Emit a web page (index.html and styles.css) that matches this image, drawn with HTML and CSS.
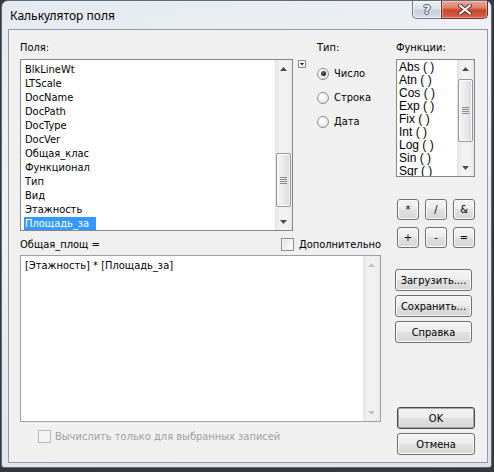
FILE: index.html
```html
<!DOCTYPE html>
<html>
<head>
<meta charset="utf-8">
<title>Калькулятор поля</title>
<link rel="stylesheet" href="styles.css">
</head>
<body>
<div class="window">
  <div class="titlebar">
    <span class="title">Калькулятор поля</span>
    <div class="caption-btns">
      <div class="cap-help"><span class="help-glyph">?</span></div>
      <div class="cap-close">
        <svg width="14" height="11" viewBox="0 0 14 11">
          <path d="M2 1.5 L12 9.5 M12 1.5 L2 9.5" stroke="#5a2a22" stroke-width="4" stroke-linecap="round"/>
          <path d="M2 1.5 L12 9.5 M12 1.5 L2 9.5" stroke="#ffffff" stroke-width="2.2" stroke-linecap="round"/>
        </svg>
      </div>
    </div>
  </div>
  <div class="client">
    <div class="left">
      <div class="top-row">
        <div class="fields-col">
          <div class="label">Поля:</div>
          <div class="listbox fields">
            <div class="items">
              <div class="item">BlkLineWt</div>
              <div class="item">LTScale</div>
              <div class="item">DocName</div>
              <div class="item">DocPath</div>
              <div class="item">DocType</div>
              <div class="item">DocVer</div>
              <div class="item">Общая_клас</div>
              <div class="item">Функционал</div>
              <div class="item">Тип</div>
              <div class="item">Вид</div>
              <div class="item">Этажность</div>
              <div class="item"><span class="sel">Площадь_за</span></div>
            </div>
            <div class="vscroll">
              <div class="arrow"><svg width="7" height="4" viewBox="0 0 7 4"><path d="M0 4 L3.5 0 L7 4 Z" fill="#4a4a4a"/></svg></div>
              <div class="track">
                <div class="thumb thumb-fields">
                  <svg width="7" height="7" viewBox="0 0 7 7"><path d="M0 0.5 H7 M0 2.5 H7 M0 4.5 H7 M0 6.5 H7" stroke="#8a8a8a" stroke-width="1"/></svg>
                </div>
              </div>
              <div class="arrow"><svg width="7" height="4" viewBox="0 0 7 4"><path d="M0 0 L3.5 4 L7 0 Z" fill="#4a4a4a"/></svg></div>
            </div>
          </div>
        </div>
        <div class="mini-btn"><svg width="4" height="3" viewBox="0 0 4 3"><path d="M0 0 L2 2.5 L4 0 Z" fill="#222"/></svg></div>
        <div class="type-col">
          <div class="label">Тип:</div>
          <div class="radio first"><span class="rb checked"></span>Число</div>
          <div class="radio"><span class="rb"></span>Строка</div>
          <div class="radio"><span class="rb"></span>Дата</div>
        </div>
      </div>
      <div class="expr-row">
        <div class="label expr-label">Общая_площ =</div>
        <div class="check"><span class="cb"></span>Дополнительно</div>
      </div>
      <div class="textarea">
        <div class="expr-text">[Этажность] * [Площадь_за]</div>
        <div class="vscroll disabled">
          <div class="arrow"><svg width="7" height="4" viewBox="0 0 7 4"><path d="M0 4 L3.5 0 L7 4 Z" fill="#c2c2c2"/></svg></div>
          <div class="track"></div>
          <div class="arrow"><svg width="7" height="4" viewBox="0 0 7 4"><path d="M0 0 L3.5 4 L7 0 Z" fill="#c2c2c2"/></svg></div>
        </div>
      </div>
      <div class="check disabled only-selected"><span class="cb"></span>Вычислить только для выбранных записей</div>
    </div>
    <div class="right">
      <div class="label">Функции:</div>
      <div class="listbox funcs">
        <div class="items">
          <div class="fitem">Abs ( )</div>
          <div class="fitem">Atn ( )</div>
          <div class="fitem">Cos ( )</div>
          <div class="fitem">Exp ( )</div>
          <div class="fitem">Fix ( )</div>
          <div class="fitem">Int ( )</div>
          <div class="fitem">Log ( )</div>
          <div class="fitem">Sin ( )</div>
          <div class="fitem">Sqr ( )</div>
        </div>
        <div class="vscroll">
          <div class="arrow"><svg width="7" height="4" viewBox="0 0 7 4"><path d="M0 4 L3.5 0 L7 4 Z" fill="#4a4a4a"/></svg></div>
          <div class="track">
            <div class="thumb thumb-funcs">
              <svg width="7" height="7" viewBox="0 0 7 7"><path d="M0 0.5 H7 M0 2.5 H7 M0 4.5 H7 M0 6.5 H7" stroke="#8a8a8a" stroke-width="1"/></svg>
            </div>
          </div>
          <div class="arrow"><svg width="7" height="4" viewBox="0 0 7 4"><path d="M0 0 L3.5 4 L7 0 Z" fill="#4a4a4a"/></svg></div>
        </div>
      </div>
      <div class="ops">
        <div class="btn op">*</div>
        <div class="btn op">/</div>
        <div class="btn op">&amp;</div>
        <div class="btn op">+</div>
        <div class="btn op">-</div>
        <div class="btn op">=</div>
      </div>
      <div class="stack">
        <div class="btn wide">Загрузить....</div>
        <div class="btn wide">Сохранить...</div>
        <div class="btn wide">Справка</div>
      </div>
      <div class="stack bottom">
        <div class="btn wide2 default">OK</div>
        <div class="btn wide2">Отмена</div>
      </div>
    </div>
  </div>
</div>
</body>
</html>
```

FILE: styles.css
```css
* { box-sizing: border-box; }

body {
  margin: 0;
  width: 494px;
  height: 472px;
  overflow: hidden;
  background: #34383c;
  font-family: "DejaVu Sans Condensed", "DejaVu Sans", sans-serif;
  font-size: 11px;
  color: #000;
}

.window {
  margin-left: 1px;
  width: 491px;
  height: 468px;
  border: 1px solid #5f6c78;
  border-radius: 7px 7px 3px 3px;
  background: linear-gradient(165deg, #e4eaf0 0%, #f0f3f6 35%, #e2e8ee 70%, #dce3ea 100%);
  display: flex;
  flex-direction: column;
}

.titlebar {
  flex: none;
  height: 28px;
  display: flex;
  align-items: flex-start;
}

.title {
  font-family: "Noto Sans", sans-serif;
  font-size: 12px;
  line-height: 14px;
  margin: 8px 0 0 8px;
  color: #000;
}

.caption-btns {
  margin-left: auto;
  margin-right: 3px;
  display: flex;
}

.cap-help {
  width: 29px;
  height: 18px;
  border: 1px solid #6e7b89;
  border-top: none;
  border-right: none;
  border-radius: 0 0 0 5px;
  background: linear-gradient(#edf1f5 0%, #dbe2ea 45%, #c8d1db 55%, #d5dde6 100%);
  box-shadow: inset 0 0 0 1px rgba(255,255,255,0.6);
  display: flex;
  align-items: center;
  justify-content: center;
}

.help-glyph {
  font-family: "DejaVu Sans", sans-serif;
  font-weight: bold;
  font-size: 13px;
  line-height: 13px;
  color: #f4f6f8;
  text-shadow: 1px 0 0 #4d5966, -1px 0 0 #4d5966, 0 1px 0 #4d5966, 0 -1px 0 #4d5966;
}

.cap-close {
  width: 47px;
  height: 18px;
  border: 1px solid #6b3026;
  border-top: none;
  border-radius: 0 0 5px 0;
  background: linear-gradient(#eaa99a 0%, #dd7f6a 40%, #c8462c 55%, #d2624d 100%);
  box-shadow: inset 0 0 0 1px rgba(255,220,210,0.45);
  display: flex;
  align-items: center;
  justify-content: center;
}

.client {
  flex: none;
  margin: 0 3px 0 6px;
  height: 434px;
  border: 1px solid #8f9ba8;
  background: #f0f0f0;
  padding: 11px 0 7px 11px;
  display: flex;
  gap: 15px;
}

.label {
  height: 13px;
  line-height: 13px;
  white-space: nowrap;
}

/* left area */
.left {
  width: 361px;
  display: flex;
  flex-direction: column;
}

.top-row {
  display: flex;
  height: 190px;
}

.fields-col {
  width: 273px;
  display: flex;
  flex-direction: column;
}

.listbox {
  border: 1px solid #828790;
  background: #fff;
  display: flex;
}

.listbox .items {
  flex: 1;
  overflow: hidden;
}

.fields {
  margin-top: 5px;
  height: 172px;
}

.fields .items {
  padding: 3px 0 0 3px;
}

.item {
  height: 14px;
  line-height: 14px;
  padding-left: 1px;
  white-space: nowrap;
}

.sel {
  display: inline-block;
  width: 72px;
  margin-left: -1px;
  padding-left: 1px;
  background: #3399ff;
  color: #fff;
}

.vscroll {
  width: 17px;
  flex: none;
  display: flex;
  flex-direction: column;
  background: linear-gradient(90deg, #e3e3e3 0%, #f2f2f2 30%, #f2f2f2 70%, #e8e8e8 100%);
}

.vscroll .arrow {
  height: 17px;
  flex: none;
  display: flex;
  align-items: center;
  justify-content: center;
}

.vscroll .track {
  flex: 1;
  display: flex;
  flex-direction: column;
  align-items: center;
}

.thumb {
  width: 15px;
  border: 1px solid #979797;
  border-radius: 2px;
  background: linear-gradient(90deg, #f4f4f4 0%, #ebebec 50%, #dadadc 100%);
  box-shadow: inset 0 0 0 1px #fbfbfb;
  display: flex;
  align-items: center;
  justify-content: center;
}

.thumb-fields {
  margin-top: 76px;
  height: 54px;
}

.thumb-funcs {
  margin-top: 2px;
  height: 63px;
}

.vscroll.disabled {
  background: linear-gradient(90deg, #e6e6e6 0%, #f1f1f1 30%, #f1f1f1 70%, #eaeaea 100%);
}

.mini-btn {
  width: 8px;
  height: 8px;
  margin: 19px 0 0 5px;
  border: 1px solid #8a8a8a;
  background: #f4f4f4;
  display: flex;
  align-items: center;
  justify-content: center;
}

.type-col {
  margin-left: 11px;
  display: flex;
  flex-direction: column;
}

.radio {
  height: 13px;
  line-height: 13px;
  margin-top: 11px;
  display: flex;
  align-items: center;
  gap: 5px;
  white-space: nowrap;
}

.radio.first {
  margin-top: 13px;
}

.rb {
  width: 12px;
  height: 12px;
  border: 1px solid #8e8f8f;
  border-radius: 50%;
  background: radial-gradient(circle at 40% 35%, #ffffff 0%, #f0f0f0 45%, #d3d3d3 100%);
  display: flex;
  align-items: center;
  justify-content: center;
}

.rb.checked::after {
  content: "";
  width: 5px;
  height: 5px;
  border-radius: 50%;
  background: radial-gradient(circle at 40% 35%, #6a6a6a 0%, #1b1b1b 70%);
}

.expr-row {
  margin-top: 7px;
  height: 13px;
  display: flex;
}

.expr-label {
  width: 271px;
}

.check {
  display: flex;
  align-items: center;
  gap: 5px;
  height: 13px;
  line-height: 13px;
  white-space: nowrap;
}

.cb {
  width: 13px;
  height: 13px;
  flex: none;
  border: 1px solid #8e8f8f;
  background: linear-gradient(135deg, #dcdcdc 0%, #f4f4f4 60%, #ffffff 100%);
  box-shadow: inset 0 0 0 1px #f6f6f6;
}

.textarea {
  margin-top: 4px;
  height: 167px;
  border: 1px solid #9a9ea6;
  background: #fff;
  display: flex;
}

.expr-text {
  flex: 1;
  padding: 3px 0 0 4px;
  line-height: 13px;
}

.check.only-selected {
  margin-top: 8px;
  margin-left: 18px;
  gap: 4px;
  color: #a0a0a0;
}

.check.disabled .cb {
  border-color: #b8b8b8;
  background: #f4f4f4;
  box-shadow: none;
}

/* right column */
.right {
  width: 79px;
  display: flex;
  flex-direction: column;
}

.funcs {
  margin-top: 5px;
  height: 118px;
}

.funcs .items {
  padding: 1px 0 0 2px;
}

.fitem {
  height: 13px;
  line-height: 13px;
  font-family: "Liberation Sans", Arial, sans-serif;
  font-size: 12px;
  white-space: nowrap;
}

.btn {
  border: 1px solid #707070;
  border-radius: 3px;
  background: linear-gradient(#f4f4f4 0%, #ececec 50%, #e0e0e0 50%, #d6d6d6 100%);
  box-shadow: inset 0 0 0 1px #fafafa;
  display: flex;
  align-items: center;
  justify-content: center;
  white-space: nowrap;
  line-height: 13px;
}

.ops {
  margin: 22px 0 0 1px;
  display: grid;
  grid-template-columns: repeat(3, 22px);
  grid-auto-rows: 21px;
  column-gap: 6px;
  row-gap: 7px;
}

.op {
  font-size: 11px;
}

.stack {
  display: flex;
  flex-direction: column;
  gap: 4px;
}

.stack:not(.bottom) {
  margin-top: 21px;
}

.wide {
  width: 77px;
  height: 22px;
  margin-left: -1px;
}

.stack.bottom {
  margin-top: auto;
}

.wide2 {
  width: 78px;
  height: 22px;
  margin-left: 1px;
}

.btn.default {
  border-color: #4a4a4a;
  box-shadow: inset 0 0 0 1px #a8a8a8;
}
```
